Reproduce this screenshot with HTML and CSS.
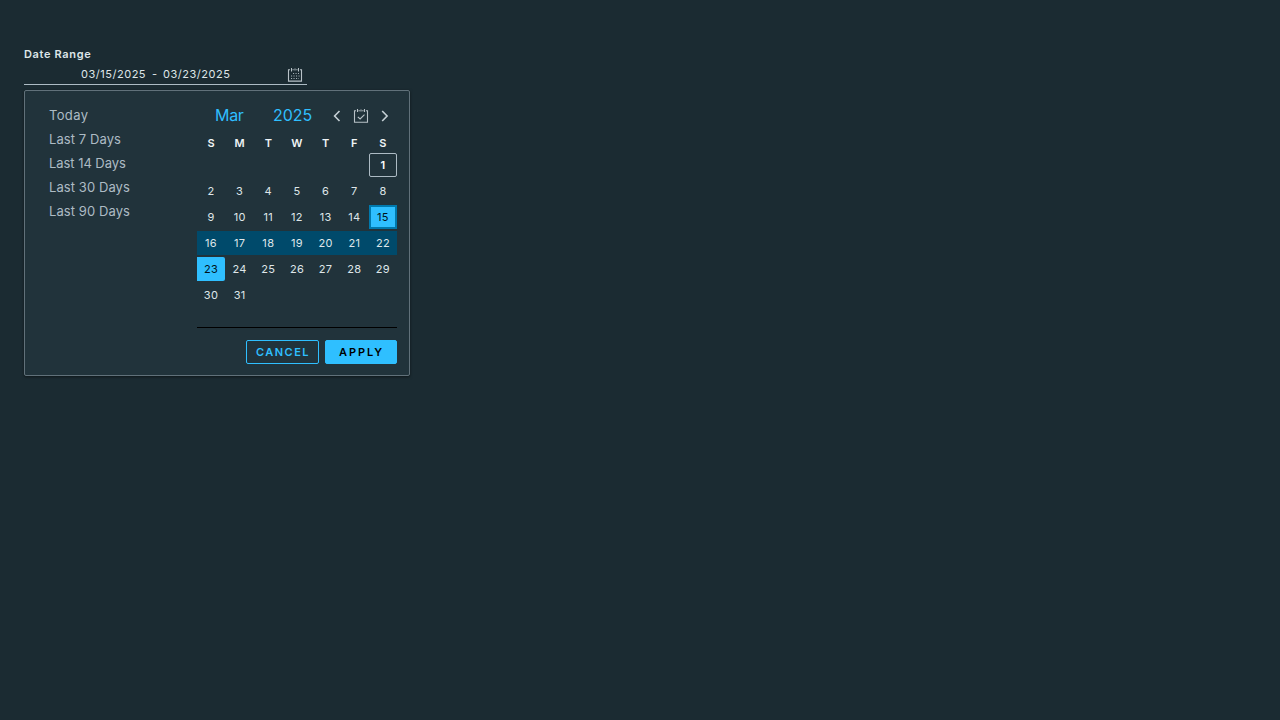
FILE: index.html
```html
<!DOCTYPE html>
<html lang="en">
<head>
<meta charset="utf-8">
<title>Date Range</title>
<link rel="stylesheet" href="styles.css">
</head>
<body>
<main class="field">
  <div class="label">Date Range</div>
  <div class="input">
    <span class="date">03/15/2025</span><span class="dash">-</span><span class="date">03/23/2025</span>
    <svg class="calendar-icon" width="16" height="16" viewBox="0 0 16 16" fill="none"><path d="M3 2.8H1.5v11.3h13V2.8H13M5.5 2.8h1.2M9.3 2.8h1.2" stroke="#b8c2c7" stroke-width="1.1"/><path d="M4.5 1v3.5M11.5 1v3.5M8 1.5v2" stroke="#b8c2c7"/><path d="M6 6.5h6M4 9h9M4 11.5h8" stroke="#a3afb5" stroke-dasharray="1.1 1.4"/></svg>
  </div>
  <section class="panel">
    <ul class="ranges">
      <li class="today">Today</li><li>Last 7 Days</li><li class="two-weeks">Last 14 Days</li><li>Last 30 Days</li><li>Last 90 Days</li>
    </ul>
    <div class="picker">
      <header class="heading">
        <span class="month">Mar</span><span class="year">2025</span>
        <svg class="nav" width="16" height="16" viewBox="0 0 16 16"><path d="M10.5 3 5.6 8l4.9 5" /></svg>
        <svg class="nav current" width="16" height="16" viewBox="0 0 16 16"><path d="M3 2.8H1.5v11.4h13V2.8H13M5.5 2.8h1.3M9.2 2.8h1.3M4.5 1v3M11.5 1v3M8 1.5v2M4.8 8.8l2.3 2.2 4.4-4.4"/></svg>
        <svg class="nav" width="16" height="16" viewBox="0 0 16 16"><path d="m5.2 3 4.9 5-4.9 5"/></svg>
      </header>
      <div class="grid weekdays"><span>S</span><span>M</span><span>T</span><span>W</span><span>T</span><span>F</span><span>S</span></div>
      <div class="grid days">
        <span class="today-cell">1</span>
        <span>2</span><span>3</span><span>4</span><span>5</span><span>6</span><span>7</span><span>8</span>
        <span>9</span><span>10</span><span>11</span><span>12</span><span>13</span><span>14</span><span class="selected focused">15</span>
        <span class="in-range">16</span><span class="in-range">17</span><span class="in-range">18</span><span class="in-range">19</span><span class="in-range">20</span><span class="in-range">21</span><span class="in-range last">22</span>
        <span class="selected">23</span><span>24</span><span>25</span><span>26</span><span>27</span><span>28</span><span>29</span>
        <span>30</span><span>31</span>
      </div>
      <footer class="actions"><button class="cancel">CANCEL</button><button class="apply">APPLY</button></footer>
    </div>
  </section>
</main>
</body>
</html>
```
FILE: styles.css
```css
* { box-sizing: border-box; }
body { margin: 0; min-height: 720px; background: #1b2b32; color: #dfe6e9; font-family: Inter, sans-serif; font-size: 11px; }
.field { padding: 46px 24px 0; }
.label { height: 16px; line-height: 16px; font-weight: 600; letter-spacing: .65px; }
.input { display: flex; align-items: center; width: 283px; height: 23px; padding: 2px 4px 0 57px; border-bottom: 1px solid #adbbc4; line-height: 20px; }
.date { width: 66px; letter-spacing: .52px; white-space: nowrap; }
.dash { width: 16px; padding-left: 5px; }
.calendar-icon { margin: 1px 0 0 auto; }
.panel { display: flex; width: 386px; height: 286px; margin-top: 5px; border: 1px solid #61717a; border-radius: 2px; background: #21333b; box-shadow: 0 1px 3px rgba(0, 0, 0, .5); }
.ranges { width: 172px; margin: 0; padding: 12px 0 0 24px; list-style: none; font-size: 13px; line-height: 24px; color: #adbbc4; letter-spacing: .08px; }
.today { letter-spacing: .35px; }
.two-weeks { letter-spacing: -.05px; }
.picker { width: 200px; padding-top: 12px; }
.heading { display: flex; align-items: center; height: 26px; color: #2fbfff; font-size: 16px; }
.month { width: 59px; padding: 0 0 2px 18px; letter-spacing: -.3px; }
.year { width: 73px; padding: 0 0 2px 17px; }
.nav { flex: none; margin-right: 8px; fill: none; stroke: #c5d0d5; stroke-width: 1.6; }
.nav:last-child { margin-right: 0; }
.current { stroke: #b8c2c7; stroke-width: 1.1; }
.grid { display: grid; grid-template-columns: repeat(7, 28px); justify-content: space-between; text-align: center; }
.weekdays { height: 24px; line-height: 28px; font-weight: 600; color: #f0f5f7; }
.days { height: 174px; grid-auto-rows: 24px; row-gap: 2px; line-height: 24px; align-content: start; letter-spacing: .3px; }
.today-cell { grid-column: 7; border: 1px solid #adbbc4; border-radius: 2px; line-height: 22px; font-weight: 600; color: #fff; }
.selected { background: #2fbfff; color: #00131c; border-radius: 0 2px 2px 0; }
.focused { border: 2px solid #0079ad; border-radius: 0; line-height: 20px; }
.in-range { background: #004a6b; box-shadow: 1px 0 #004a6b; }
.last { box-shadow: none; }
.actions { display: flex; justify-content: flex-end; gap: 6px; padding-top: 12px; border-top: 1px solid #000; }
button { height: 24px; padding: 0 0 0 1px; border: 1px solid #2fbfff; border-radius: 2px; font: 600 11px/22px Inter, sans-serif; letter-spacing: 1.5px; }
.cancel { width: 73px; background: transparent; color: #2fbfff; }
.apply { width: 72px; background: #2fbfff; color: #000; letter-spacing: 1.9px; }
```
